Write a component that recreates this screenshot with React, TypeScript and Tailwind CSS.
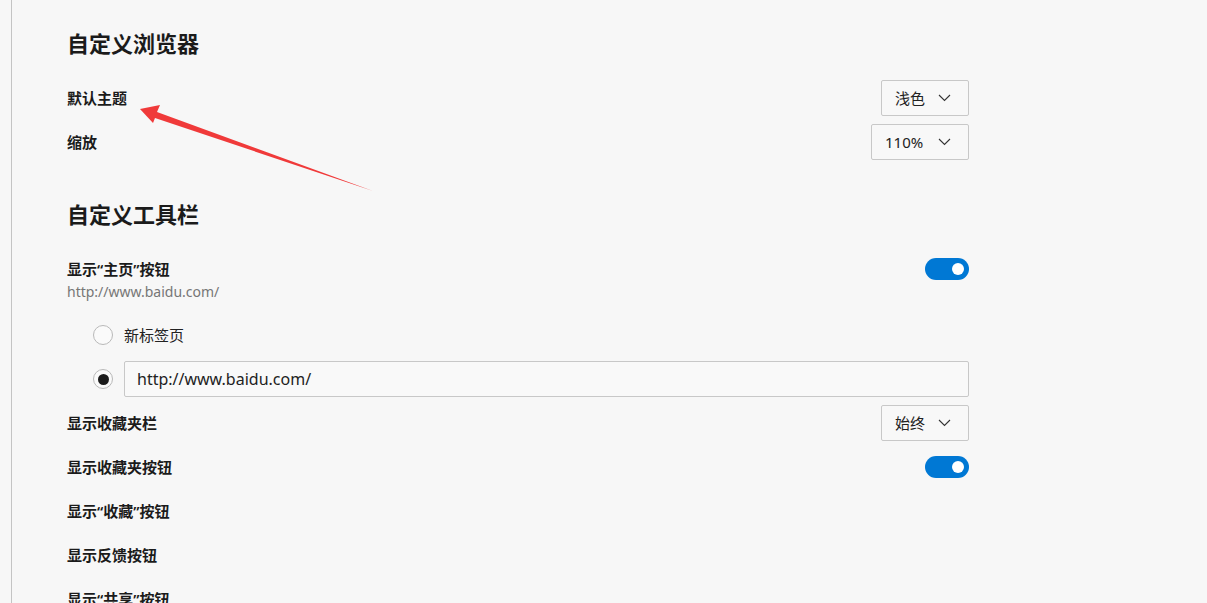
import React from 'react';

const font = "font-['Segoe_UI','Noto_Sans','Noto_Sans_CJK_SC',sans-serif]";

const Chevron = () => (
  <svg width="13" height="8" viewBox="0 0 13 8" fill="none" className="ml-auto">
    <path d="M1 1l5.5 5.5L12 1" stroke="#333" strokeWidth="1.1" />
  </svg>
);

const Select: React.FC<{ value: string; width: string }> = ({ value, width }) => (
  <div className={`${width} h-9 flex items-center pl-[13px] pr-[17px] border border-[#c8c8c8] rounded-[2px] bg-[#f8f8f8] text-[15px] text-[#222]`}>
    <span>{value}</span>
    <Chevron />
  </div>
);

const Toggle = () => (
  <div className="w-11 h-[22px] rounded-full bg-[#0078d4] flex items-center justify-end pr-[5px]">
    <div className="w-3 h-3 rounded-full bg-white" />
  </div>
);

const Label: React.FC<{ children: React.ReactNode }> = ({ children }) => (
  <span className="text-[15px] font-semibold text-[#1b1b1b]">{children}</span>
);

const Row: React.FC<{ label: string; control?: React.ReactNode }> = ({ label, control }) => (
  <div className="h-9 flex items-center justify-between">
    <Label>{label}</Label>
    {control}
  </div>
);

const Radio: React.FC<{ checked?: boolean }> = ({ checked }) => (
  <div className="w-5 h-5 rounded-full border border-[#b9b9b9] bg-[#fafafa] flex items-center justify-center shrink-0">
    {checked && <div className="w-[11px] h-[11px] rounded-full bg-[#1b1b1b]" />}
  </div>
);

export default function App() {
  return (
    <div className={`relative w-[1207px] h-[603px] overflow-hidden bg-[#f7f7f7] flex ${font}`}>
      <div className="w-[12px] shrink-0 border-r border-[#c4c4c4]" />
      <div className="ml-[55px] w-[902px] pt-7">
        <h2 className="h-[30px] leading-[30px] text-[22px] font-bold text-[#1b1b1b]">自定义浏览器</h2>
        <div className="mt-[22px] flex flex-col gap-2">
          <Row label="默认主题" control={<Select value="浅色" width="w-[88px]" />} />
          <Row label="缩放" control={<Select value="110%" width="w-[98px]" />} />
        </div>

        <h2 className="mt-[39px] h-[30px] leading-[30px] text-[22px] font-bold text-[#1b1b1b]">自定义工具栏</h2>
        <div className="mt-[29px]">
          <div className="h-[22px] flex items-center justify-between">
            <Label>显示“主页”按钮</Label>
            <Toggle />
          </div>
          <div className="h-[18px] leading-[18px] mt-[3px] text-[14px] text-[#767676]">http://www.baidu.com/</div>
        </div>

        <div className="mt-4 pl-[26px] flex flex-col gap-2">
          <div className="h-9 flex items-center gap-[11px]">
            <Radio />
            <span className="text-[15px] text-[#222]">新标签页</span>
          </div>
          <div className="h-9 flex items-center gap-[11px]">
            <Radio checked />
            <div className="flex-1 h-9 border border-[#c8c8c8] rounded-[2px] bg-[#f9f9f9] flex items-center pl-3 text-[16px] text-[#222]">
              http://www.baidu.com/
            </div>
          </div>
        </div>

        <div className="mt-2 flex flex-col gap-2">
          <Row label="显示收藏夹栏" control={<Select value="始终" width="w-[88px]" />} />
          <Row label="显示收藏夹按钮" control={<Toggle />} />
          <Row label="显示“收藏”按钮" />
          <Row label="显示反馈按钮" />
          <Row label="显示“共享”按钮" />
        </div>
      </div>

      {/* annotation arrow */}
      <svg className="absolute left-0 top-0 pointer-events-none" width="1207" height="603">
        <polygon points="140,109 160,105 157,112 373,191 155,118 153,123" fill="#f03a3a" />
      </svg>
    </div>
  );
}
